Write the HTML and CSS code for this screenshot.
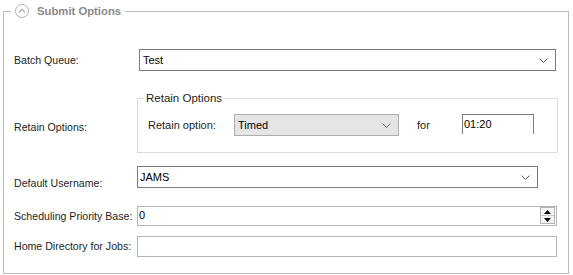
FILE: index.html
```html
<!DOCTYPE html>
<html>
<head>
<meta charset="utf-8">
<link rel="stylesheet" href="styles.css">
</head>
<body>
<fieldset class="panel">
  <legend class="panel-title">
    <svg class="collapse-icon" width="16" height="16" viewBox="0 0 16 16">
      <circle cx="8" cy="8" r="6.5" fill="none" stroke="#b0b0b0" stroke-width="1"/>
      <polyline points="4.8,9.6 8,6.4 11.2,9.6" fill="none" stroke="#a8a8a8" stroke-width="1.2"/>
    </svg>
    <span>Submit Options</span>
  </legend>

  <div class="row row-batch">
    <div class="label">Batch Queue:</div>
    <div class="combo combo-batch">
      <span class="value">Test</span>
      <svg class="chev" width="9" height="5" viewBox="0 0 9 5"><polyline points="0.5,0.5 4.5,4.5 8.5,0.5" fill="none" stroke="#555" stroke-width="1"/></svg>
    </div>
  </div>

  <div class="row row-retain">
    <div class="label label-retain">Retain Options:</div>
    <fieldset class="group">
      <legend class="group-title">Retain Options</legend>
      <div class="group-row">
        <div class="inner-label">Retain option:</div>
        <div class="combo combo-retain">
          <span class="value">Timed</span>
          <svg class="chev" width="9" height="5" viewBox="0 0 9 5"><polyline points="0.5,0.5 4.5,4.5 8.5,0.5" fill="none" stroke="#666" stroke-width="1"/></svg>
        </div>
        <div class="for-label">for</div>
        <div class="timebox">01:20</div>
      </div>
    </fieldset>
  </div>

  <div class="row row-user">
    <div class="label label-user">Default Username:</div>
    <div class="combo combo-user">
      <span class="value">JAMS</span>
      <svg class="chev" width="9" height="5" viewBox="0 0 9 5"><polyline points="0.5,0.5 4.5,4.5 8.5,0.5" fill="none" stroke="#555" stroke-width="1"/></svg>
    </div>
  </div>

  <div class="row row-prio">
    <div class="label">Scheduling Priority Base:</div>
    <div class="textbox textbox-prio">
      <span class="value value-top">0</span>
      <div class="spinner">
        <div class="spin-btn"><svg width="7" height="4" viewBox="0 0 7 4"><polygon points="0,4 7,4 3.5,0" fill="#000"/></svg></div>
        <div class="spin-btn"><svg width="7" height="4" viewBox="0 0 7 4"><polygon points="0,0 7,0 3.5,4" fill="#000"/></svg></div>
      </div>
    </div>
  </div>

  <div class="row row-home">
    <div class="label">Home Directory for Jobs:</div>
    <div class="textbox textbox-home"></div>
  </div>
</fieldset>
</body>
</html>
```

FILE: styles.css
```css
html, body {
  margin: 0;
  padding: 0;
  background: #ffffff;
}

body {
  padding-top: 3px;
  font-family: "Liberation Sans", Arial, sans-serif;
  font-size: 11px;
  color: #1e1e1e;
}

.panel {
  box-sizing: border-box;
  margin: 0 0 0 3px;
  width: 566px;
  padding: 0 0 16px 10px;
  border: 1px solid #bdbdbd;
  min-inline-size: 0;
}

.panel-title {
  display: flex;
  align-items: center;
  height: 16px;
  margin-left: -3px;
  padding: 0 4px 0 3px;
  color: #8a8a8a;
  font-weight: bold;
  font-size: 11.3px;
}

.collapse-icon {
  display: block;
  margin-right: 7px;
}

.row {
  display: flex;
  align-items: center;
}

.label {
  width: 123px;
  flex: none;
  line-height: 13px;
  font-size: 10.6px;
  white-space: nowrap;
}

.row-batch {
  margin-top: 30px;
}

.row-retain {
  margin-top: 20px;
  align-items: flex-start;
}

.label-retain {
  padding-top: 30px;
}

.row-user {
  margin-top: 13px;
  align-items: flex-start;
}

.label-user {
  padding-top: 11px;
}

.row-prio {
  margin-top: 16px;
}

.row-home {
  margin-top: 10px;
}

.combo {
  box-sizing: border-box;
  display: flex;
  align-items: center;
  justify-content: space-between;
  height: 22px;
  border: 1px solid #7a7a7a;
  background: #ffffff;
  color: #000;
  padding: 0 7px 0 3px;
}

.combo .value {
  line-height: 13px;
}

.chev {
  display: block;
}

.combo-batch {
  width: 417px;
  margin-left: 2px;
}

.combo-user {
  width: 401px;
  padding-left: 2px;
}

.combo-retain {
  width: 165px;
  background: #e5e5e5;
  border-color: #adadad;
  padding-left: 3px;
  padding-right: 7px;
}

.textbox {
  box-sizing: border-box;
  display: flex;
  justify-content: space-between;
  border: 1px solid #b4b4b4;
  background: #fff;
  color: #000;
  padding: 0 1px 0 1px;
}

.textbox-prio {
  width: 420px;
  height: 20px;
  align-items: flex-start;
}

.value-top {
  line-height: 13px;
  padding-top: 2px;
}

.textbox-home {
  width: 420px;
  height: 21px;
}

.spinner {
  display: flex;
  flex-direction: column;
  width: 15px;
  height: 17px;
  box-sizing: border-box;
  border: 1px solid #b4b4b4;
  background: #f4f4f4;
}

.spin-btn {
  flex: 1;
  display: flex;
  align-items: center;
  justify-content: center;
}

.spin-btn + .spin-btn {
  border-top: 1px solid #c8c8c8;
}

.spin-btn svg {
  display: block;
}

.group {
  box-sizing: border-box;
  width: 421px;
  margin: 0;
  padding: 0 0 16px 10px;
  border: 1px solid #dcdcdc;
  min-inline-size: 0;
}

.group-title {
  margin-left: -4px;
  padding: 0 2px 0 2px;
  line-height: 14px;
  font-size: 11.5px;
  color: #1e1e1e;
}

.group-row {
  display: flex;
  align-items: center;
  margin-top: 9px;
}

.inner-label {
  width: 86px;
  flex: none;
  line-height: 13px;
}

.for-label {
  margin-left: 18px;
  width: 45px;
  line-height: 13px;
}

.timebox {
  box-sizing: border-box;
  width: 72px;
  height: 20px;
  border: 1px solid #7a7a7a;
  border-bottom: none;
  padding: 3px 0 0 1px;
  line-height: 13px;
  color: #000;
  align-self: flex-start;
}
```
